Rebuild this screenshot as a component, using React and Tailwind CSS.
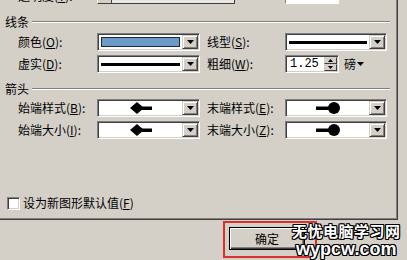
import React from 'react';

const DropBtn = () => (
  <div className="flex h-full w-[16px] shrink-0 items-center justify-center border border-t-[#d4d0c8] border-l-[#d4d0c8] border-b-[#404040] border-r-[#404040] bg-[#d4d0c8] shadow-[inset_1px_1px_0_#ffffff,inset_-1px_-1px_0_#808080]">
    <svg width="7" height="4" viewBox="0 0 7 4">
      <path d="M0 0h7L3.5 4z" fill="#000" />
    </svg>
  </div>
);

const Sunken = ({ className = '', children }) => (
  <div
    className={`flex h-[18px] border border-[#808080] border-b-white border-r-white bg-white p-[1px] shadow-[inset_1px_1px_0_#404040,inset_-1px_-1px_0_#d4d0c8] ${className}`}
  >
    {children}
  </div>
);

const Combo = ({ w, children }) => (
  <Sunken className={w}>
    <div className="flex flex-1 items-center overflow-hidden">{children}</div>
    <DropBtn />
  </Sunken>
);

const Label = ({ w, text, k }) => (
  <div className={`${w} shrink-0 whitespace-nowrap`}>
    {text}(<span className="underline">{k}</span>):
  </div>
);

const LineSample = () => <div className="mx-[2px] h-[3px] flex-1 bg-black" />;

const DiamondStart = () => (
  <svg width="83" height="14" viewBox="0 0 83 14">
    <path d="M31 7l7-6 7 6-7 6z" fill="#000" />
    <rect x="38" y="5.5" width="15" height="3.5" fill="#000" />
  </svg>
);

const CircleEnd = () => (
  <svg width="82" height="14" viewBox="0 0 82 14">
    <rect x="29" y="5.5" width="16" height="3.5" fill="#000" />
    <circle cx="47" cy="7" r="6" fill="#000" />
  </svg>
);

const GroupHead = ({ text, className = '' }) => (
  <div className={`flex h-[14px] items-center pl-[5px] pr-[7px] ${className}`}>
    <span className="whitespace-nowrap">{text}</span>
    <div className="ml-[3px] h-[2px] flex-1 border-t border-t-[#808080] border-b border-b-white" />
  </div>
);

const SpinBtn = ({ up }) => (
  <div className="flex h-[7px] w-full items-center justify-center border border-t-[#d4d0c8] border-l-[#d4d0c8] border-b-[#404040] border-r-[#404040] bg-[#d4d0c8]">
    <svg width="5" height="3" viewBox="0 0 5 3">
      <path d={up ? 'M0 3h5L2.5 0z' : 'M0 0h5L2.5 3z'} fill="#000" />
    </svg>
  </div>
);

export default function App() {
  const outline =
    '[text-shadow:-1px_-1px_0_#000,1px_-1px_0_#000,-1px_1px_0_#000,1px_1px_0_#000,0_1px_0_#000,0_-1px_0_#000,1px_0_0_#000,-1px_0_0_#000]';

  return (
    <div className="relative h-[260px] w-[407px] overflow-hidden bg-[#d4d0c8] text-[12px] leading-none text-black [font-family:'Noto_Sans_CJK_SC','Liberation_Sans',sans-serif]">
      <div className="flex h-[220px] w-[398px] flex-col border-r border-b border-[#404040] shadow-[inset_-1px_-1px_0_#808080]">
        {/* partially visible row at the top */}
        <div className="mt-[-12px] flex h-[16px] items-center pl-[18px]">
          <Label w="w-[79px]" text="透明度" k="T" />
          <div className="flex h-[16px] w-[138px] bg-[#e9e7e2]">
            <div className="h-full w-[15px] border border-t-white border-l-white border-b-[#404040] border-r-[#404040] bg-[#d4d0c8]" />
            <div className="flex-1 border-b border-r border-[#404040]" />
          </div>
          <div className="ml-[50px] h-[16px] w-[54px] border border-[#808080] border-b-white border-r-white bg-white" />
        </div>

        <GroupHead text="线条" className="mt-[11px]" />

        <div className="mt-[4px] flex items-center pl-[18px]">
          <Label w="w-[79px]" text="颜色" k="O" />
          <Combo w="w-[103px]">
            <div className="mx-[2px] h-[10px] flex-1 border border-[#1a2a3a] bg-[#6c9bc8]" />
          </Combo>
          <Label w="ml-[7px] w-[78px]" text="线型" k="S" />
          <Combo w="w-[102px]">
            <LineSample />
          </Combo>
        </div>

        <div className="mt-[4px] flex items-center pl-[18px]">
          <Label w="w-[79px]" text="虚实" k="D" />
          <Combo w="w-[103px]">
            <LineSample />
          </Combo>
          <Label w="ml-[7px] w-[78px]" text="粗细" k="W" />
          <Sunken className="w-[54px]">
            <div className="flex flex-1 items-center pl-[3px] [font-family:'Liberation_Mono',monospace]">1.25</div>
            <div className="flex w-[13px] flex-col">
              <SpinBtn up />
              <SpinBtn />
            </div>
          </Sunken>
          <div className="ml-[5px] flex items-center">
            磅
            <svg width="7" height="4" viewBox="0 0 7 4" className="ml-[1px]">
              <path d="M0 0h7L3.5 4z" fill="#000" />
            </svg>
          </div>
        </div>

        <GroupHead text="箭头" className="mt-[9px]" />

        <div className="mt-[3px] flex items-center pl-[18px]">
          <Label w="w-[79px]" text="始端样式" k="B" />
          <Combo w="w-[103px]">
            <DiamondStart />
          </Combo>
          <Label w="ml-[7px] w-[78px]" text="末端样式" k="E" />
          <Combo w="w-[102px]">
            <CircleEnd />
          </Combo>
        </div>

        <div className="mt-[4px] flex items-center pl-[18px]">
          <Label w="w-[79px]" text="始端大小" k="I" />
          <Combo w="w-[103px]">
            <DiamondStart />
          </Combo>
          <Label w="ml-[7px] w-[78px]" text="末端大小" k="Z" />
          <Combo w="w-[102px]">
            <CircleEnd />
          </Combo>
        </div>

        <div className="mt-[57px] flex h-[14px] items-center pl-[7px]">
          <div className="h-[13px] w-[13px] border border-[#808080] border-b-white border-r-white bg-white shadow-[inset_1px_1px_0_#404040,inset_-1px_-1px_0_#d4d0c8]" />
          <div className="ml-[3px] whitespace-nowrap">
            设为新图形默认值(<span className="underline">F</span>)
          </div>
        </div>
      </div>

      <div className="flex pl-[229px] pt-[7px]">
        <div className="flex h-[23px] w-[76px] items-center justify-center border border-black bg-[#d4d0c8] shadow-[inset_1px_1px_0_#ffffff,inset_-1px_-1px_0_#404040,inset_-2px_-2px_0_#808080]">
          确定
        </div>
      </div>

      {/* red highlight annotation */}
      <div className="absolute left-[223px] top-[221px] h-[37px] w-[94px] border-2 border-[#d8302c]" />

      {/* watermark */}
      <div className="absolute left-[292px] top-[222px] flex flex-col items-center">
        <div className={`whitespace-nowrap text-[15px] font-bold leading-[18px] tracking-[0.5px] text-white ${outline}`}>
          无忧电脑学习网
        </div>
        <div className={`whitespace-nowrap text-[18px] font-bold leading-[18px] text-white [font-family:'Liberation_Sans',sans-serif] ${outline}`}>
          wypcw.com
        </div>
      </div>
    </div>
  );
}
